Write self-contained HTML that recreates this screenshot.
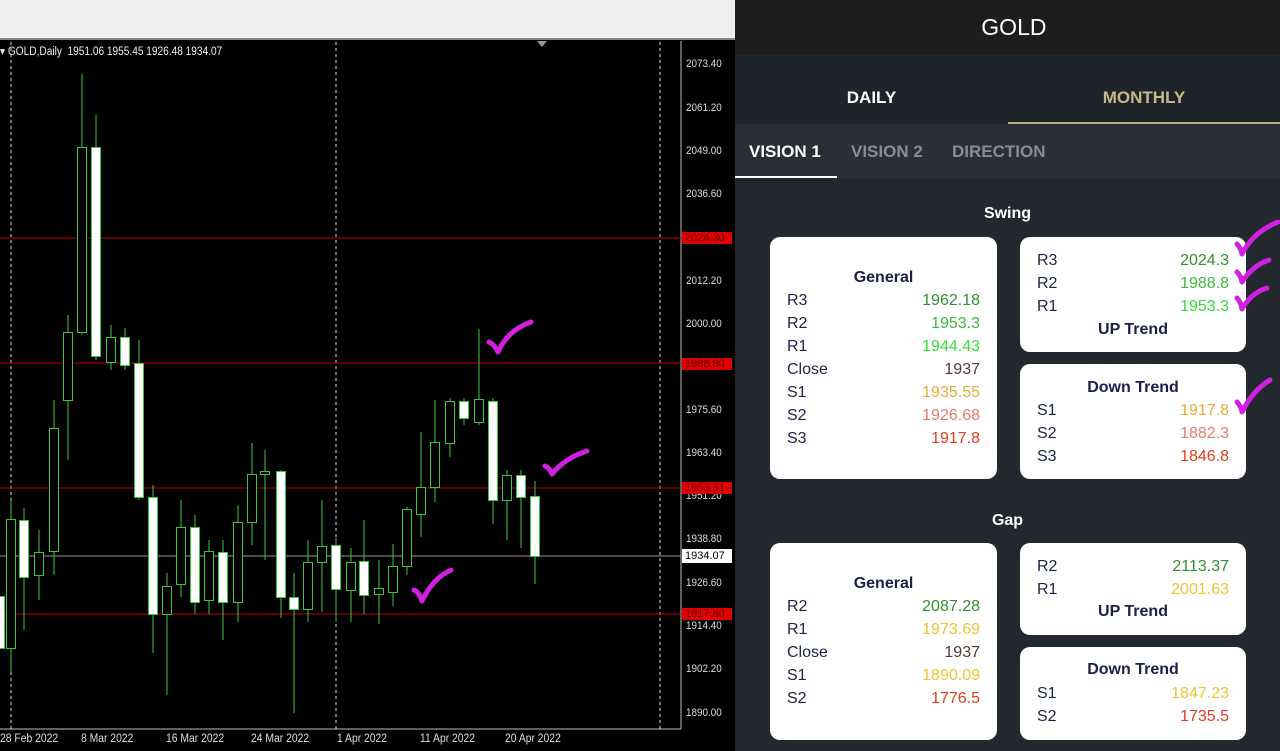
<!DOCTYPE html>
<html><head><meta charset="utf-8"><style>
*{margin:0;padding:0;box-sizing:border-box}
body{width:1280px;height:751px;overflow:hidden;background:#000;font-family:"Liberation Sans",sans-serif;position:relative}
.a{position:absolute}
.lbl{position:absolute;left:686px;font-size:11px;color:#ddd;transform:scaleX(.9);transform-origin:left}
.rl{position:absolute;left:682px;width:50px;height:12px;background:#e00000;color:#600;font-size:11px;line-height:12px;padding-left:3px}
.dt{position:absolute;top:733px;font-size:11.5px;color:#ddd;transform:scaleX(.9);transform-origin:left}
.card{position:absolute;background:#fff;border-radius:10px}
.row{position:absolute;left:17px;right:17px;height:23px;font-size:16px;line-height:23px;color:#1c2245}
.row span{position:absolute;right:0;top:0}
.t{position:absolute;left:0;right:0;text-align:center;font-weight:bold;font-size:16px;color:#1b1f4a}
.g3{color:#2f8f2f}.g2{color:#3cb83c}.g1{color:#36dd36}.cl{color:#5a3535}.y{color:#e8a83a}.sa{color:#e8786a}.r{color:#e03c1e}.yy{color:#efc332}
</style></head><body>
<div class="a" style="left:0;top:0;width:735px;height:38px;background:#efefef"></div>
<div class="a" style="left:0;top:38px;width:735px;height:2px;background:#888"></div>
<svg class="a" style="left:0;top:40px" width="735" height="711">
<g transform="translate(0,-40)">
<line x1="681" y1="41" x2="681" y2="729" stroke="#bbb"/>
<line x1="0" y1="729" x2="681" y2="729" stroke="#bbb"/>
<g stroke="#ddd" stroke-dasharray="3,3"><line x1="11" y1="42" x2="11" y2="729"/><line x1="336" y1="42" x2="336" y2="729"/><line x1="660" y1="42" x2="660" y2="729"/></g>
<polygon points="537,41 547,41 542,47" fill="#999"/>
<g stroke="#c00000" stroke-width="1"><line x1="0" y1="238" x2="681" y2="238"/><line x1="0" y1="363" x2="681" y2="363"/><line x1="0" y1="488" x2="681" y2="488"/><line x1="0" y1="614" x2="681" y2="614"/></g>
<line x1="0" y1="556" x2="681" y2="556" stroke="#999"/>
<g stroke="#3ec63e" stroke-width="1">
<line x1="11" y1="500" x2="11" y2="672"/><line x1="24" y1="508" x2="24" y2="630"/><line x1="39" y1="530" x2="39" y2="600"/><line x1="54" y1="400" x2="54" y2="575"/><line x1="68" y1="315" x2="68" y2="460"/><line x1="82" y1="74" x2="82" y2="335"/><line x1="96" y1="115" x2="96" y2="360"/><line x1="111" y1="325" x2="111" y2="370"/><line x1="125" y1="328" x2="125" y2="370"/><line x1="139" y1="340" x2="139" y2="500"/><line x1="153" y1="485" x2="153" y2="653"/><line x1="167" y1="573" x2="167" y2="695"/><line x1="181" y1="500" x2="181" y2="597"/><line x1="195" y1="515" x2="195" y2="614"/><line x1="209" y1="540" x2="209" y2="614"/><line x1="223" y1="540" x2="223" y2="640"/><line x1="238" y1="505" x2="238" y2="622"/><line x1="252" y1="443" x2="252" y2="545"/><line x1="265" y1="450" x2="265" y2="560"/><line x1="281" y1="470" x2="281" y2="618"/><line x1="294" y1="573" x2="294" y2="713"/><line x1="308" y1="540" x2="308" y2="622"/><line x1="322" y1="500" x2="322" y2="612"/><line x1="336" y1="538" x2="336" y2="622"/><line x1="351" y1="548" x2="351" y2="622"/><line x1="364" y1="520" x2="364" y2="614"/><line x1="379" y1="560" x2="379" y2="624"/><line x1="393" y1="544" x2="393" y2="606"/><line x1="407" y1="507" x2="407" y2="575"/><line x1="421" y1="432" x2="421" y2="537"/><line x1="435" y1="400" x2="435" y2="502"/><line x1="450" y1="398" x2="450" y2="457"/><line x1="464" y1="398" x2="464" y2="425"/><line x1="479" y1="329" x2="479" y2="425"/><line x1="493" y1="398" x2="493" y2="524"/><line x1="507" y1="470" x2="507" y2="540"/><line x1="521" y1="470" x2="521" y2="548"/><line x1="535" y1="481" x2="535" y2="584"/>
</g>
<g stroke="#3ec63e" fill="#000">
<rect x="6.5" y="519.5" width="9" height="129"/><rect x="34.5" y="552.5" width="9" height="23"/><rect x="49.5" y="428.5" width="9" height="123"/><rect x="63.5" y="332.5" width="9" height="68"/><rect x="77.5" y="147.5" width="9" height="185"/><rect x="106.5" y="337.5" width="9" height="25"/><rect x="162.5" y="586.5" width="9" height="28"/><rect x="176.5" y="527.5" width="9" height="57"/><rect x="204.5" y="551.5" width="9" height="49"/><rect x="233.5" y="522.5" width="9" height="80"/><rect x="247.5" y="474.5" width="9" height="48"/><rect x="260.5" y="471.5" width="9" height="3"/><rect x="303.5" y="562.5" width="9" height="47"/><rect x="317.5" y="546.5" width="9" height="16"/><rect x="346.5" y="562.5" width="9" height="28"/><rect x="374.5" y="588.5" width="9" height="6"/><rect x="388.5" y="566.5" width="9" height="26"/><rect x="402.5" y="509.5" width="9" height="57"/><rect x="416.5" y="487.5" width="9" height="27"/><rect x="430.5" y="442.5" width="9" height="45"/><rect x="445.5" y="401.5" width="9" height="42"/><rect x="474.5" y="399.5" width="9" height="23"/><rect x="502.5" y="475.5" width="9" height="25"/>
</g>
<g fill="#fff" stroke="#3ec63e">
<rect x="-4.5" y="596.5" width="9" height="52"/><rect x="19.5" y="520.5" width="9" height="57"/><rect x="91.5" y="147.5" width="9" height="209"/><rect x="120.5" y="337.5" width="9" height="28"/><rect x="134.5" y="363.5" width="9" height="134"/><rect x="148.5" y="497.5" width="9" height="117"/><rect x="190.5" y="527.5" width="9" height="75"/><rect x="218.5" y="552.5" width="9" height="50"/><rect x="276.5" y="471.5" width="9" height="126"/><rect x="289.5" y="597.5" width="9" height="12"/><rect x="331.5" y="545.5" width="9" height="44"/><rect x="359.5" y="561.5" width="9" height="34"/><rect x="459.5" y="401.5" width="9" height="17"/><rect x="488.5" y="401.5" width="9" height="99"/><rect x="516.5" y="475.5" width="9" height="22"/><rect x="530.5" y="496.5" width="9" height="60"/>
</g>
<g stroke="#d020e0" stroke-width="5" fill="none" stroke-linecap="round" stroke-linejoin="round">
<path d="M489,342 Q495,345 498,352 Q508,330 531,322"/>
<path d="M545,466 Q550,468 552,474 Q565,458 587,451"/>
<path d="M414,590 Q419,592 422,601 Q433,578 451,570"/>
</g>
</g>
</svg>
<div class="a" style="left:0;top:44px;font-size:11.5px;color:#eee;transform:scaleX(.88);transform-origin:left">▾ GOLD,Daily &nbsp;1951.06 1955.45 1926.48 1934.07</div>
<div class="lbl" style="top:58px">2073.40</div><div class="lbl" style="top:102px">2061.20</div><div class="lbl" style="top:145px">2049.00</div><div class="lbl" style="top:188px">2036.60</div>
<div class="rl" style="top:232px">2024.30</div>
<div class="lbl" style="top:275px">2012.20</div><div class="lbl" style="top:318px">2000.00</div>
<div class="rl" style="top:358px">1988.80</div>
<div class="lbl" style="top:404px">1975.60</div><div class="lbl" style="top:447px">1963.40</div>
<div class="lbl" style="top:490px">1951.20</div>
<div class="rl" style="top:482px">1953.31</div>
<div class="lbl" style="top:533px">1938.80</div>
<div class="a" style="left:682px;top:549px;width:50px;height:14px;background:#fff;color:#000;font-size:11px;line-height:14px;padding-left:3px">1934.07</div>
<div class="lbl" style="top:577px">1926.60</div>
<div class="rl" style="top:608px">1917.80</div>
<div class="lbl" style="top:620px">1914.40</div><div class="lbl" style="top:663px">1902.20</div><div class="lbl" style="top:707px">1890.00</div>
<div class="dt" style="left:0">28 Feb 2022</div><div class="dt" style="left:81px">8 Mar 2022</div><div class="dt" style="left:166px">16 Mar 2022</div><div class="dt" style="left:251px">24 Mar 2022</div><div class="dt" style="left:337px">1 Apr 2022</div><div class="dt" style="left:420px">11 Apr 2022</div><div class="dt" style="left:505px">20 Apr 2022</div>

<div class="a" style="left:735px;top:0;width:545px;height:751px;background:#23282e"></div>
<div class="a" style="left:735px;top:0;width:545px;height:55px;background:#1d1d1d;color:#fff;font-size:23px;text-align:center;line-height:54px">&nbsp;&nbsp;GOLD</div>
<div class="a" style="left:735px;top:55px;width:545px;height:69px;background:#1f242a"></div>
<div class="a" style="left:735px;top:88px;width:273px;text-align:center;color:#fff;font-size:17px;font-weight:bold">DAILY</div>
<div class="a" style="left:1008px;top:88px;width:272px;text-align:center;color:#c7b98a;font-size:17px;font-weight:bold">MONTHLY</div>
<div class="a" style="left:1008px;top:122px;width:272px;height:2px;background:#b8ab80"></div>
<div class="a" style="left:735px;top:124px;width:545px;height:54px;background:#2a2f36"></div>
<div class="a" style="left:749px;top:142px;color:#fff;font-size:17px;font-weight:bold">VISION 1</div>
<div class="a" style="left:851px;top:142px;color:#8a8d92;font-size:17px;font-weight:bold">VISION 2</div>
<div class="a" style="left:952px;top:142px;color:#8a8d92;font-size:17px;font-weight:bold">DIRECTION</div>
<div class="a" style="left:735px;top:176px;width:102px;height:2px;background:#fff"></div>

<div class="a" style="left:735px;top:205px;width:545px;text-align:center;color:#fff;font-size:16px;font-weight:bold">Swing</div>
<div class="card" style="left:770px;top:237px;width:227px;height:242px">
<div class="t" style="top:32px">General</div>
<div class="row" style="top:52px">R3<span class="g3">1962.18</span></div>
<div class="row" style="top:75px">R2<span class="g2">1953.3</span></div>
<div class="row" style="top:98px">R1<span class="g1">1944.43</span></div>
<div class="row" style="top:121px">Close<span class="cl">1937</span></div>
<div class="row" style="top:144px">S1<span class="y">1935.55</span></div>
<div class="row" style="top:167px">S2<span class="sa">1926.68</span></div>
<div class="row" style="top:190px">S3<span class="r">1917.8</span></div>
</div>
<div class="card" style="left:1020px;top:237px;width:226px;height:115px">
<div class="row" style="top:12px">R3<span class="g3">2024.3</span></div>
<div class="row" style="top:35px">R2<span class="g2">1988.8</span></div>
<div class="row" style="top:58px">R1<span class="g1">1953.3</span></div>
<div class="t" style="top:84px">UP Trend</div>
</div>
<div class="card" style="left:1020px;top:364px;width:226px;height:115px">
<div class="t" style="top:15px">Down Trend</div>
<div class="row" style="top:35px">S1<span class="y">1917.8</span></div>
<div class="row" style="top:58px">S2<span class="sa">1882.3</span></div>
<div class="row" style="top:81px">S3<span class="r">1846.8</span></div>
</div>

<div class="a" style="left:735px;top:512px;width:545px;text-align:center;color:#fff;font-size:16px;font-weight:bold">Gap</div>
<div class="card" style="left:770px;top:543px;width:227px;height:197px">
<div class="t" style="top:32px">General</div>
<div class="row" style="top:52px">R2<span class="g3">2087.28</span></div>
<div class="row" style="top:75px">R1<span class="yy">1973.69</span></div>
<div class="row" style="top:98px">Close<span class="cl">1937</span></div>
<div class="row" style="top:121px">S1<span class="yy">1890.09</span></div>
<div class="row" style="top:144px">S2<span class="r">1776.5</span></div>
</div>
<div class="card" style="left:1020px;top:543px;width:226px;height:92px">
<div class="row" style="top:12px">R2<span class="g3">2113.37</span></div>
<div class="row" style="top:35px">R1<span class="yy">2001.63</span></div>
<div class="t" style="top:60px">UP Trend</div>
</div>
<div class="card" style="left:1020px;top:647px;width:226px;height:93px">
<div class="t" style="top:14px">Down Trend</div>
<div class="row" style="top:35px">S1<span class="yy">1847.23</span></div>
<div class="row" style="top:58px">S2<span class="r">1735.5</span></div>
</div>
<svg class="a" style="left:1225px;top:210px" width="55" height="220">
<g stroke="#d020e0" stroke-width="5" fill="none" stroke-linecap="round" stroke-linejoin="round">
<path d="M12,34 Q16,38 17,44 Q28,22 53,12"/>
<path d="M12,62 Q16,66 17,72 Q28,55 44,50"/>
<path d="M12,88 Q16,92 17,99 Q27,82 42,78"/>
<path d="M12,192 Q16,196 17,202 Q28,180 45,170"/>
</g></svg>
</body></html>
